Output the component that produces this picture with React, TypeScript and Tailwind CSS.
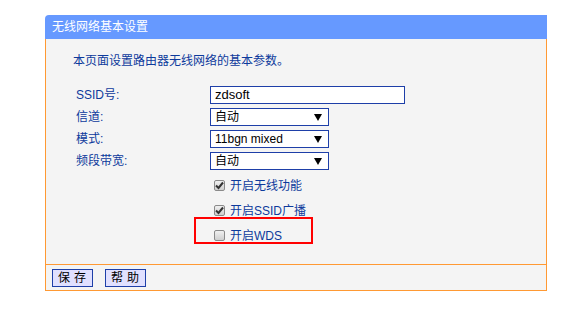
import React from 'react';

const font = { fontFamily: '"Liberation Sans", "Noto Sans CJK SC", sans-serif' };

function Select({ value }: { value: string }) {
    return (
        <div className="w-[119px] h-[18px] border border-[#1e3fa8] bg-white flex items-center justify-between pl-[4px] pr-[6px] text-[12px] text-black leading-none">
            <span>{value}</span>
            <svg width="8" height="7" viewBox="0 0 8 7">
                <path d="M0 0 H8 L4 7 Z" fill="#000" />
            </svg>
        </div>
    );
}

function Check({ checked, label }: { checked: boolean; label: string }) {
    return (
        <div className="h-[25px] flex items-center pl-[4px] gap-[5px]">
            <div className="w-[11px] h-[11px] rounded-[2px] border border-[#8a8a8a] bg-gradient-to-b from-[#f0f0f0] to-[#cfcfcf] flex items-center justify-center">
                {checked && (
                    <svg width="9" height="9" viewBox="0 0 9 9">
                        <path d="M1 4.5 L3.5 7 L8 1.5" stroke="#333" strokeWidth="2" fill="none" />
                    </svg>
                )}
            </div>
            <span className="text-[12px] text-[#0d3a9c] leading-none">{label}</span>
        </div>
    );
}

export default function App() {
    return (
        <div className="w-[581px] h-[318px] bg-white pt-[15px] pl-[45px]" style={font}>
            <div className="w-[502px] relative">
                {/* title */}
                <div className="h-[24px] bg-[#6699ff] rounded-tl-[4px] flex items-center pl-[7px] text-white text-[12px]">
                    无线网络基本设置
                </div>

                {/* body */}
                <div className="h-[226px] bg-[#f4f4f4] border-x border-b border-[#ff9933]">
                    <div className="pt-[16px] pl-[27px] text-[12px] leading-[12px] text-[#0d3a9c]">
                        本页面设置路由器无线网络的基本参数。
                    </div>

                    <div className="mt-[19px] pl-[30px] grid grid-cols-[134px_1fr] gap-y-[4px] text-[12px] text-[#0d3a9c] items-center">
                        <span>SSID号:</span>
                        <div className="w-[195px] h-[18px] border border-[#1e3fa8] bg-white flex items-center pl-[4px] text-[13px] text-black">
                            zdsoft
                        </div>
                        <span>信道:</span>
                        <Select value="自动" />
                        <span>模式:</span>
                        <Select value="11bgn mixed" />
                        <span>频段带宽:</span>
                        <Select value="自动" />
                    </div>

                    <div className="mt-[3px] pl-[164px]">
                        <Check checked label="开启无线功能" />
                        <Check checked label="开启SSID广播" />
                        <Check checked={false} label="开启WDS" />
                    </div>
                </div>

                {/* footer */}
                <div className="h-[26px] bg-[#f4f4f4] border-x border-b border-[#ff9933] flex items-center pl-[6px] gap-[12px]">
                    <button className="w-[41px] h-[18px] bg-[#e0e0ff] border border-[#1e3fa8] text-[12px] text-black tracking-[4px] pl-[3px] leading-none">
                        保存
                    </button>
                    <button className="w-[41px] h-[18px] bg-[#e0e0ff] border border-[#1e3fa8] text-[12px] text-black tracking-[4px] pl-[3px] leading-none">
                        帮助
                    </button>
                </div>

                {/* annotation */}
                <div className="absolute left-[149px] top-[202px] w-[119px] h-[27px] border-2 border-[#ff0000]" />
            </div>
        </div>
    );
}
